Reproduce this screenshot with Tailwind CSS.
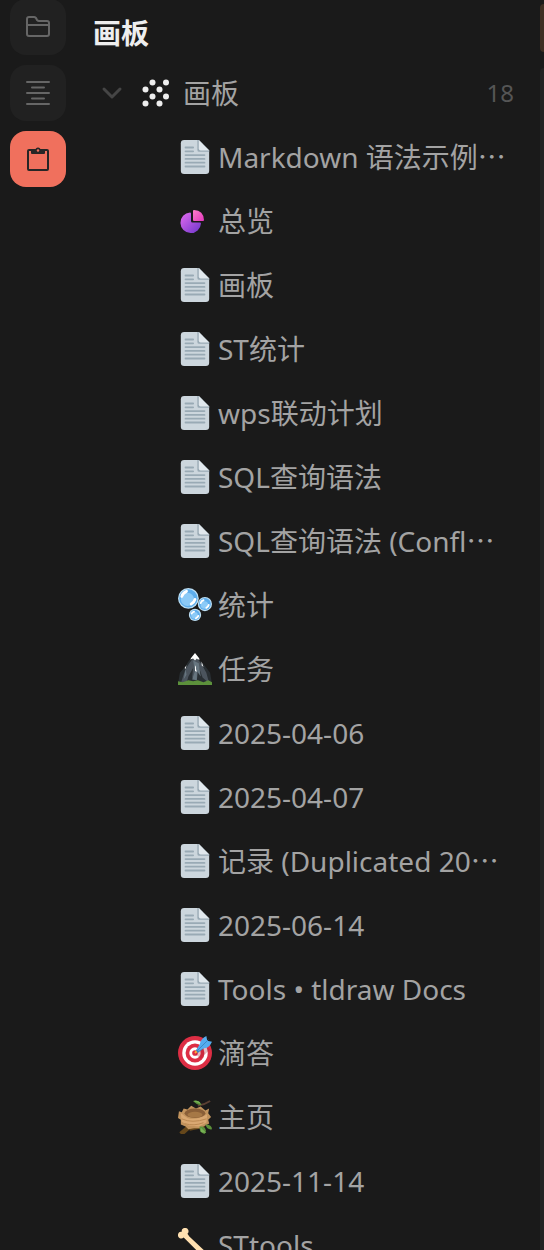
<!DOCTYPE html>
<html lang="zh-CN">

<head>
    <meta charset="UTF-8" />
    <meta name="viewport" content="width=device-width, initial-scale=1.0" />
    <title>画板</title>
    <script src="https://cdn.jsdelivr.net/npm/@tailwindcss/browser@4"></script>
</head>

<body class="bg-[#1a1a1a] text-[#a3a3a3] font-['Noto_Sans','Noto_Sans_CJK_SC',sans-serif]">
    <!-- Iconos compartidos -->
    <svg class="absolute size-0">
        <defs>
            <linearGradient id="violeta" x1="0" y1="0" x2="1" y2="1">
                <stop offset="0" stop-color="#e46cf0" />
                <stop offset="1" stop-color="#6d35c9" />
            </linearGradient>
            <linearGradient id="rosa" x1="0" y1="0" x2="1" y2="1">
                <stop offset="0" stop-color="#ff80c8" />
                <stop offset="1" stop-color="#e236bd" />
            </linearGradient>
        </defs>
        <symbol id="doc" viewBox="0 0 36 36">
            <path fill="#ccd6dd" d="M6.500 0H22L33 11V32.500Q33 36 29.500 36H6.500Q3 36 3 32.500V3.500Q3 0 6.500 0Z" />
            <path fill="#99aab5" d="M20.500 0H22L33 11V12.500H22.500Q20.500 12.500 20.500 10.500Z" />
            <path fill="#e1e8ed" d="M22 0L33 11H24Q22 11 22 9Z" />
            <path stroke="#99aab5" stroke-width="2" stroke-linecap="round" d="M8 8h8M8 12h8M8 16h20M8 20h20M8 24h20M8 28h20" />
        </symbol>
        <symbol id="chart" viewBox="0 0 34 34">
            <path fill="url(#violeta)" d="M12 8.500Q13 8.500 13 9.500V17Q13 18.500 14.500 18.500H22Q23 18.500 23 19.500A10.300 10.300 0 1 1 12 8.500Z" />
            <path fill="url(#rosa)" d="M16 6Q25.500 6.500 26 16Q26 17 25 17H16Q15 17 15 16V7Q15 6 16 6Z" />
        </symbol>
        <symbol id="bubbles" viewBox="0 0 36 36">
            <g fill="#bddff4">
                <circle cx="11" cy="11" r="11" />
                <circle cx="28.500" cy="17" r="7.500" />
                <circle cx="18" cy="28.500" r="6.500" />
            </g>
            <g fill="#5dadec">
                <circle cx="11" cy="11" r="9.700" />
                <circle cx="28.500" cy="17" r="6.300" />
                <circle cx="18" cy="28.500" r="5.300" />
            </g>
            <g fill="#8ccaf7">
                <circle cx="10" cy="12" r="7" />
                <circle cx="28" cy="18" r="4" />
                <circle cx="17.500" cy="29" r="3.500" />
            </g>
            <g fill="none" stroke="#fff" stroke-linecap="round">
                <path stroke-width="3" d="M4 9Q5 5 9 3.500M14 17Q17 15.500 18 12" />
                <path stroke-width="2" d="M24 16Q24.500 13.500 27 13M30 21Q32 20 32.500 18M14.500 27Q15 25.500 17 25M19 32Q21 31 21.500 29.500" />
            </g>
        </symbol>
        <symbol id="mountain" viewBox="0 0 36 36">
            <path fill="#292f33" d="M0 34L2 22L8 15L11 10L18 2L24 10L28 14L34 22L36 34Z" />
            <path fill="#4b545d" d="M3 33L8 18L12 12L18 4L25 13L30 22L33 33L26 27L22 16L20 29L15 27L16 17L11 26L9 33Z" />
            <path fill="#66757f" d="M16 9L18 20L15 29L20 30L20 20L24 26L22 12ZM8 18L6 29L9 24Z" />
            <path fill="#fff" d="M18 1L22 6L23 8L21 8L20 7L18 9L16 7L13 8L14 6ZM25 10L27 16L25 14ZM18 16L19 14V18L20 21L18 20ZM9 14L8 18L7 17Z" />
            <path fill="#5c913b" d="M0 35V31L5 32L11 30L16 31L21 30L27 32L32 30L36 32V35Z" />
        </symbol>
        <symbol id="target" viewBox="0 0 36 36">
            <circle cx="18" cy="18" r="18" fill="#dd2e44" />
            <circle cx="18" cy="18" r="13.500" fill="#fff" />
            <circle cx="18" cy="18" r="10" fill="#dd2e44" />
            <circle cx="18" cy="18" r="6" fill="#fff" />
            <circle cx="18" cy="18" r="3" fill="#dd2e44" />
            <path fill="#a61f31" opacity=".3" d="M18 19L24 24L34 14L27 11Z" />
            <path stroke="#ffac33" stroke-width="2" d="M18 18L21 15" />
            <path fill="#3b88c3" d="M19 15L26 5L31 10L21 18Z" />
            <path fill="#55acee" d="M23 9Q24 3 30 0L31 5L36 6Q33 13 27 13L22 16L20 14Z" />
            <path stroke="#3b88c3" stroke-width="1" d="M21 15L32 4" />
        </symbol>
        <symbol id="nest" viewBox="0 0 36 36">
            <path fill="none" stroke="#5c4033" stroke-width="2" d="M21 6Q28 5 34 1" />
            <path fill="none" stroke="#65471b" stroke-width="5" d="M3 36Q9 31 14 26M12 30L28 27" />
            <path fill="#c1935d" d="M1 12L4 13L6 9L10 10L14 6L19 9L24 7L29 11L33 9L32 14L35 18L32 21L33 25L27 28L23 30L17 30L11 31L8 28L3 26L3 21L0 19Z" />
            <path fill="#d9a872" d="M3 14L10 19Q19 22 31 15L30 24L22 28L11 27L4 23Z" />
            <ellipse cx="18" cy="14" rx="11" ry="5" fill="#8a5f38" />
            <ellipse cx="18" cy="15.500" rx="8" ry="3" fill="#a67846" />
            <path fill="none" stroke="#b98750" d="M4 20Q15 25 30 20M7 25Q17 28 27 24" />
            <path fill="#5c913b" d="M16 1Q21-1 25 5Q21 6 16 1ZM29 26Q36 26 36 31Q31 32 29 26ZM26 28Q32 31 28 36Q22 34 23 28Z" />
            <path fill="#77b255" d="M16 1Q23 0 24 4ZM24 29L30 35L24 34Z" />
        </symbol>
        <symbol id="bone" viewBox="0 0 36 36">
            <path fill="#ffe0b0" d="M0 7A3.500 3.500 0 0 1 4 4A3.500 3.500 0 0 1 7 0A3.500 3.500 0 0 1 10 6L12 9L28 24L31 26A3.500 3.500 0 1 1 32 32A3.500 3.500 0 1 1 26 31L24 28L9 13L6 10A3.500 3.500 0 0 1 0 7Z" />
        </symbol>
    </svg>

    <div class="flex h-screen overflow-hidden">
        <!-- Barra lateral -->
        <nav class="-mt-px flex w-19 shrink-0 flex-col items-center gap-2.5 text-[#666]">
            <button aria-label="文件夹" class="flex size-14 items-center justify-center rounded-2xl bg-[#212121]">
                <svg class="size-7" viewBox="0 0 28 28" fill="none" stroke="currentColor" stroke-width="2" stroke-linejoin="round">
                    <path d="M3 21V6Q3 4 5 4H10Q11 4 12 5L13 7Q14 8 15 8H23Q25 8 25 10V21Q25 23 23 23H5Q3 23 3 21ZM3 12H25" />
                </svg>
            </button>
            <button aria-label="大纲" class="flex size-14 items-center justify-center rounded-2xl bg-[#212121]">
                <svg class="size-7" viewBox="0 0 28 28" stroke="currentColor" stroke-width="2" stroke-linecap="round">
                    <path d="M3 3H25M8 8.500H20M3 14H25M8 19.500H20M3 25H25" />
                </svg>
            </button>
            <button aria-label="画板" class="flex size-14 items-center justify-center rounded-2xl bg-[#f0705d] text-[#262626]">
                <svg class="size-7" viewBox="0 0 28 28" fill="none" stroke="currentColor" stroke-width="2" stroke-linejoin="round">
                    <rect x="4" y="5" width="20" height="20" rx="1" />
                    <path fill="currentColor" stroke="none" d="M7 5H11.500A2.500 2.500 0 0 1 16.500 5H21V8Q21 9 20 9H8Q7 9 7 8Z" />
                    <circle cx="14" cy="5.500" r="1.200" fill="#f0705d" stroke="none" />
                </svg>
            </button>
        </nav>

        <!-- Panel del árbol -->
        <main class="min-w-0 flex-1 text-[28px] leading-10 whitespace-nowrap">
            <h1 class="flex h-[61px] items-center pt-1 pl-[17px] font-bold text-[#eee]">画板</h1>
            <div class="flex h-16 items-center pr-6.5 pl-6">
                <button aria-label="折叠" class="text-[#454545]">
                    <svg class="h-6 w-6" viewBox="0 0 24 24" fill="none" stroke="currentColor" stroke-width="3" stroke-linecap="round" stroke-linejoin="round">
                        <path d="M4 8L12 16L20 8" />
                    </svg>
                </button>
                <svg class="ml-4 size-8" viewBox="0 0 32 32" fill="#eee">
                    <circle cx="12.500" cy="5.500" r="3" />
                    <circle cx="26" cy="5.500" r="3" />
                    <circle cx="5.500" cy="12.500" r="3" />
                    <circle cx="19.500" cy="12.500" r="3" />
                    <circle cx="12.500" cy="19.500" r="3" />
                    <circle cx="26" cy="19.500" r="3" />
                    <circle cx="5.500" cy="26.500" r="3" />
                    <circle cx="19.500" cy="26.500" r="3" />
                </svg>
                <span class="ml-[11px] flex-1">画板</span>
                <span class="text-2xl text-[#555]">18</span>
            </div>
            <ul id="lista">
            </ul>
        </main>

        <!-- Borde del panel contiguo -->
        <div class="flex w-1 shrink-0 flex-col gap-4 pt-1">
            <div class="h-12 rounded-l-xl bg-[#3e2f23]"></div>
            <div class="flex-1 rounded-tl-xl bg-[#232323]"></div>
        </div>
    </div>

    <script>
        const documentos = [
            ["doc", "Markdown 语法示例⋯"],
            ["chart", "总览"],
            ["doc", "画板"],
            ["doc", "ST统计"],
            ["doc", "wps联动计划"],
            ["doc", "SQL查询语法"],
            ["doc", "SQL查询语法 (Confl⋯"],
            ["bubbles", "统计"],
            ["mountain", "任务"],
            ["doc", "2025-04-06"],
            ["doc", "2025-04-07"],
            ["doc", "记录 (Duplicated 20⋯"],
            ["doc", "2025-06-14"],
            ["doc", "Tools • tldraw Docs"],
            ["target", "滴答"],
            ["nest", "主页"],
            ["doc", "2025-11-14"],
            ["bone", "STtools"]
        ];

        document.getElementById('lista').innerHTML = documentos.map(([icono, nombre]) => `
            <li class="flex h-16 items-center gap-1.5 pl-[102px]">
                <svg class="size-[34px] shrink-0"><use href="#${icono}" /></svg>
                <span>${nombre}</span>
            </li>`).join('');
    </script>
</body>

</html>
